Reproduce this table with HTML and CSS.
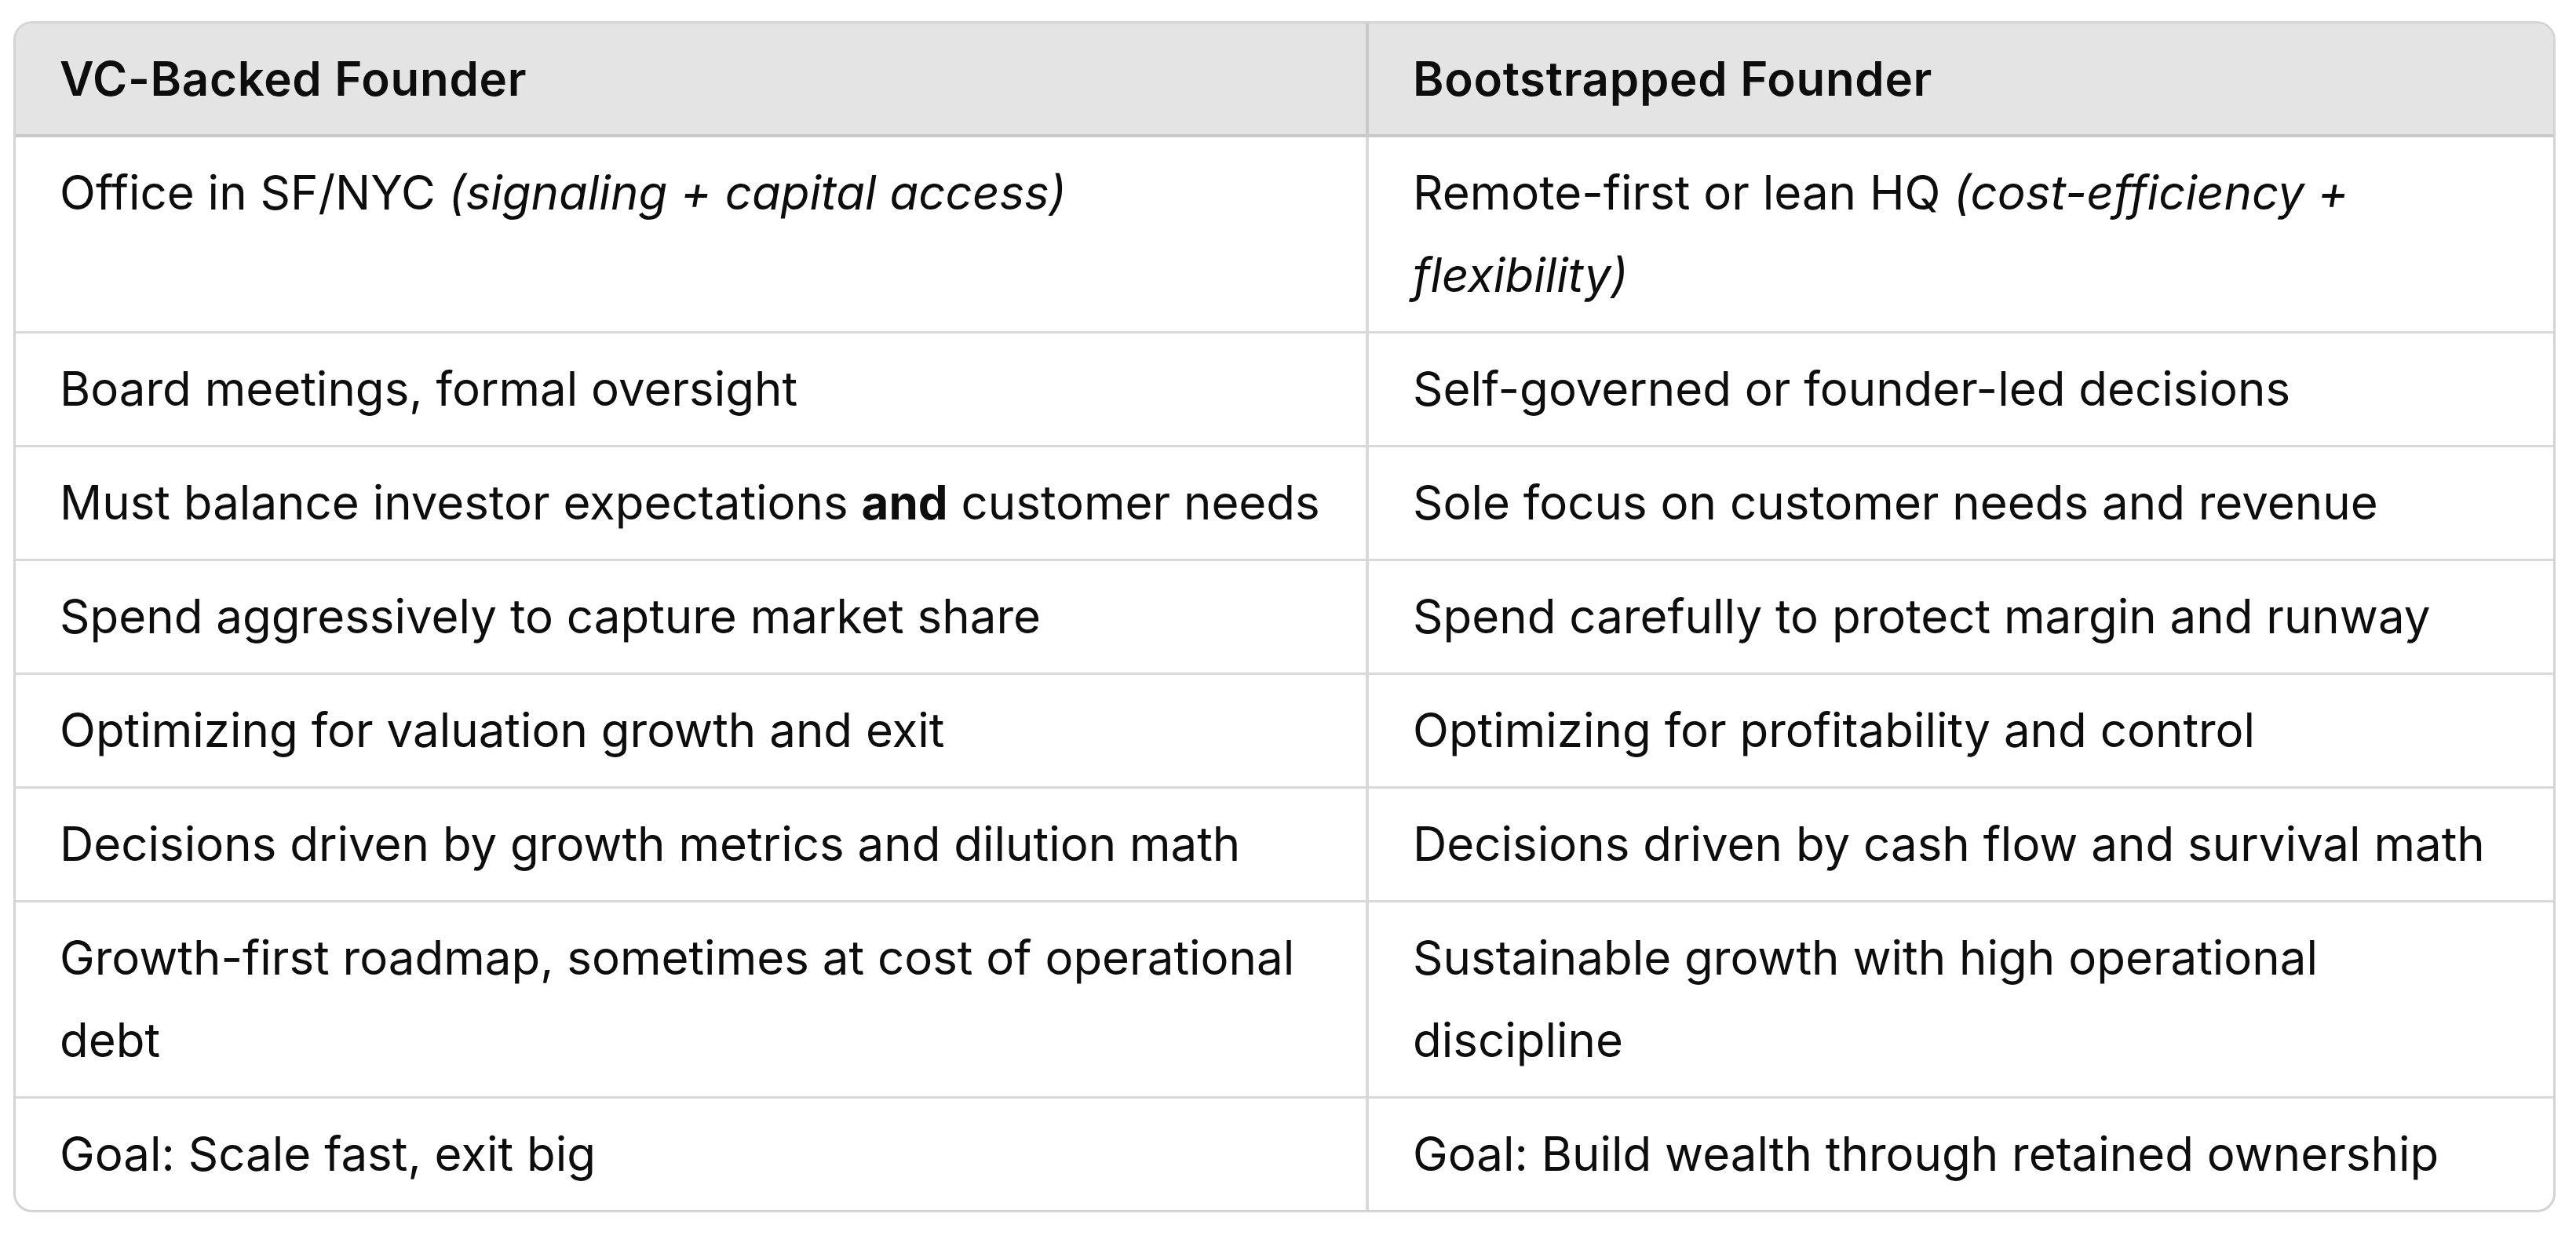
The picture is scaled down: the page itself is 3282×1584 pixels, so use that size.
FILE: index.html
```html
<!DOCTYPE html>
<html lang="en">
<head>
<meta charset="utf-8">
<title>VC-Backed vs Bootstrapped Founder</title>
<link rel="stylesheet" href="styles.css">
</head>
<body>
<div class="page">
  <div class="table-wrap">
    <table class="cmp">
      <colgroup>
        <col class="col-a">
        <col class="col-b">
      </colgroup>
      <thead>
        <tr>
          <th>VC-Backed Founder</th>
          <th>Bootstrapped Founder</th>
        </tr>
      </thead>
      <tbody>
        <tr>
          <td>Office in SF/NYC <em>(signaling + capital access)</em></td>
          <td>Remote-first or lean HQ <em>(cost-efficiency + flexibility)</em></td>
        </tr>
        <tr>
          <td>Board meetings, formal oversight</td>
          <td>Self-governed or founder-led decisions</td>
        </tr>
        <tr>
          <td>Must balance investor expectations <strong>and</strong> customer needs</td>
          <td>Sole focus on customer needs and revenue</td>
        </tr>
        <tr>
          <td>Spend aggressively to capture market share</td>
          <td>Spend carefully to protect margin and runway</td>
        </tr>
        <tr>
          <td>Optimizing for valuation growth and exit</td>
          <td>Optimizing for profitability and control</td>
        </tr>
        <tr>
          <td>Decisions driven by growth metrics and dilution math</td>
          <td>Decisions driven by cash flow and survival math</td>
        </tr>
        <tr>
          <td>Growth-first roadmap, sometimes at cost of operational debt</td>
          <td>Sustainable growth with high operational discipline</td>
        </tr>
        <tr>
          <td>Goal: Scale fast, exit big</td>
          <td>Goal: Build wealth through retained ownership</td>
        </tr>
      </tbody>
    </table>
  </div>
</div>
</body>
</html>
```

FILE: styles.css
```css
html, body {
  margin: 0;
  padding: 0;
  background: #ffffff;
}

.page {
  padding: 27px 26px 0 17px;
  font-family: Inter, "Noto Sans", "Liberation Sans", sans-serif;
  color: #0d0d0d;
}

.table-wrap {
  border: 3px solid #d4d4d4;
  border-radius: 24px;
  overflow: hidden;
}

.cmp {
  width: 100%;
  border-collapse: collapse;
  table-layout: fixed;
  font-size: 60px;
  line-height: 105px;
}

.col-a { width: 1722px; }

.cmp th,
.cmp td {
  text-align: left;
  vertical-align: top;
  padding: 18px 56px 19px 56px;
}

.cmp th {
  background: #e4e4e4;
  font-weight: 600;
  letter-spacing: 0.7px;
  padding-top: 18px;
  padding-bottom: 18px;
  border-bottom: 4px solid #c9c9c9;
}

.cmp th + th {
  border-left: 4px solid #c9c9c9;
}

.cmp td + td {
  border-left: 4px solid #d9d9d9;
}

.cmp tbody tr + tr td {
  border-top: 3px solid #d9d9d9;
}

.cmp em { font-style: italic; }
.cmp strong { font-weight: 700; }
```
